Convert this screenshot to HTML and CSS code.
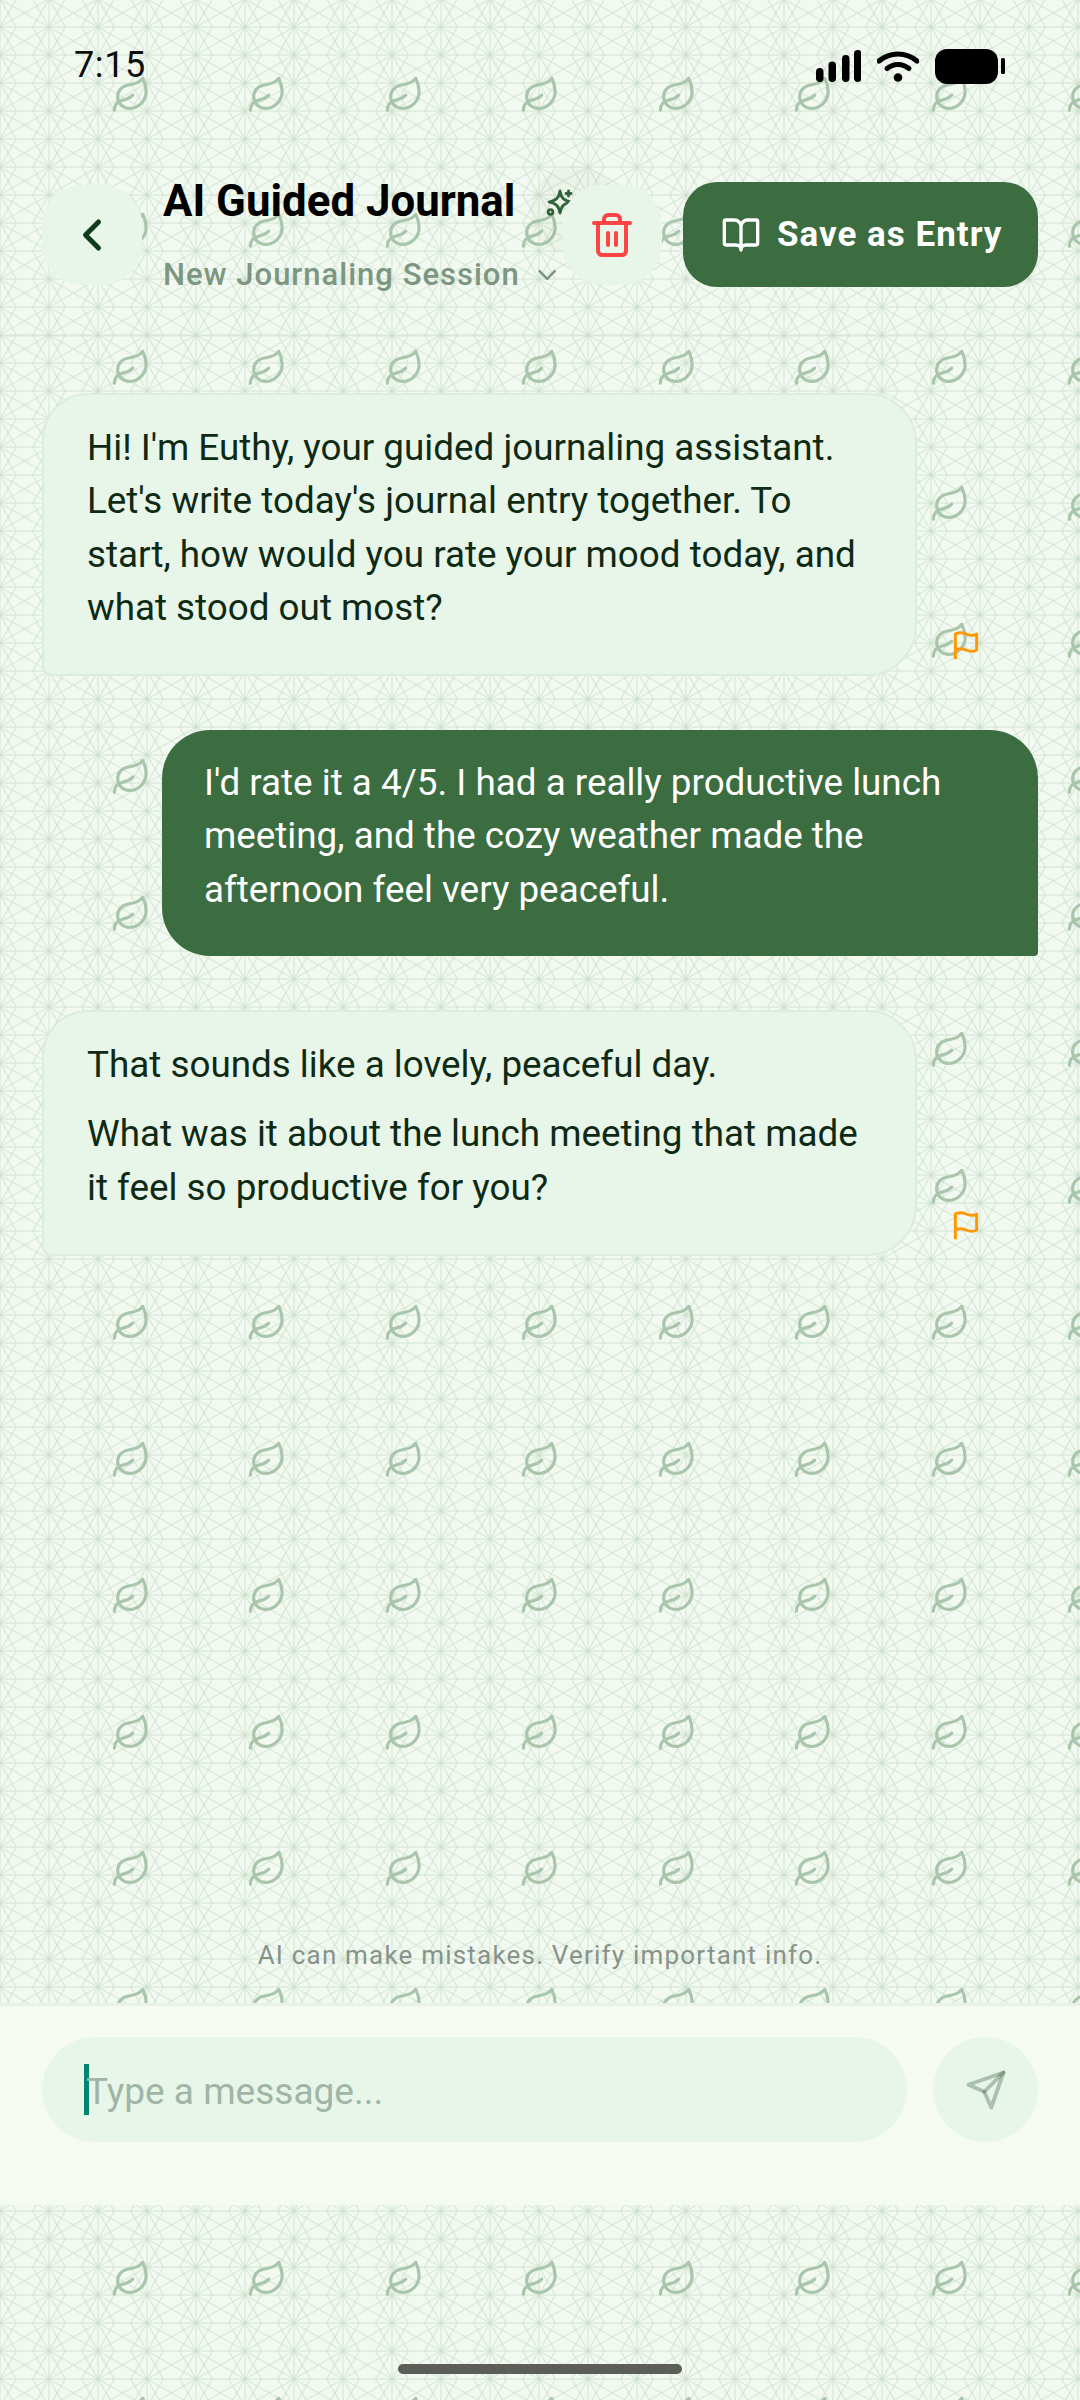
FILE: index.html
```html
<!DOCTYPE html>
<html lang="en">
<head>
<meta charset="utf-8">
<title>AI Guided Journal</title>
<link rel="stylesheet" href="styles.css">
</head>
<body>
<div class="app">
  <div class="status">
    <span class="time">7:15</span>
    <div class="status-icons">
      <svg class="sig" viewBox="0 0 45 32"><rect x="0" y="18" width="7.5" height="14" rx="3.7"/><rect x="12.5" y="11.5" width="7.5" height="20.5" rx="3.7"/><rect x="26" y="5" width="7.5" height="27" rx="3.7"/><rect x="38" y="0" width="7.5" height="32" rx="3.7"/></svg>
      <svg class="wifi" viewBox="0 0 42 32"><path class="wifi-arc" d="M2 11C13 1.500 29 1.500 40 11"/><path class="wifi-arc" d="M10 18.500C16.500 13 25.500 13 32 18.500"/><circle cx="21" cy="27.500" r="4.300"/></svg>
      <svg class="batt" viewBox="0 0 70 35"><rect x="0" y="0" width="63" height="35" rx="12"/><rect x="66" y="9" width="4" height="16" rx="1.500"/></svg>
    </div>
  </div>

  <header class="header">
    <button class="icon-btn back"><svg class="chev" viewBox="0 0 24 24"><path d="m15 18-6-6 6-6"/></svg></button>
    <div class="titles">
      <div class="title-row">
        <span class="title">AI Guided Journal</span>
        <svg class="spark" viewBox="0 0 28 28"><path d="M14 2C15.200 9 17.500 11.500 25 13 17.500 14.500 15.200 17 14 24 12.800 17 10.500 14.500 3 13 10.500 11.500 12.800 9 14 2Z"/><path d="M22.500 2v5M20 4.500h5"/><circle cx="4.500" cy="23" r="2.400"/></svg>
      </div>
      <div class="sub-row">
        <span class="subtitle">New Journaling Session</span>
        <svg class="sub-chev" viewBox="0 0 24 24"><path d="m6 9 6 6 6-6"/></svg>
      </div>
    </div>
    <button class="icon-btn trash-btn"><svg class="trash" viewBox="0 0 24 24"><path d="M3 6h18M19 6v14c0 1-1 2-2 2H7c-1 0-2-1-2-2V6M8 6V4c0-1 1-2 2-2h4c1 0 2 1 2 2v2M10 11v6M14 11v6"/></svg></button>
    <button class="save"><svg class="book" viewBox="0 0 24 24"><path d="M12 7v14M3 18a1 1 0 0 1-1-1V4a1 1 0 0 1 1-1h5a4 4 0 0 1 4 4 4 4 0 0 1 4-4h5a1 1 0 0 1 1 1v13a1 1 0 0 1-1 1h-6a3 3 0 0 0-3 3 3 3 0 0 0-3-3z"/></svg><span>Save as Entry</span></button>
  </header>

  <main class="messages">
    <div class="row">
      <div class="bubble ai"><p>Hi! I'm Euthy, your guided journaling assistant. Let's write today's journal entry together. To start, how would you rate your mood today, and what stood out most?</p></div>
      <svg class="flag" viewBox="0 0 24 24"><path d="M4 15s1-1 4-1 5 2 8 2 4-1 4-1V3s-1 1-4 1-5-2-8-2-4 1-4 1zM4 22v-7"/></svg>
    </div>
    <div class="row user-row">
      <div class="bubble user"><p>I'd rate it a 4/5. I had a really productive lunch meeting, and the cozy weather made the afternoon feel very peaceful.</p></div>
    </div>
    <div class="row">
      <div class="bubble ai"><p>That sounds like a lovely, peaceful day.</p><p>What was it about the lunch meeting that made it feel so productive for you?</p></div>
      <svg class="flag" viewBox="0 0 24 24"><path d="M4 15s1-1 4-1 5 2 8 2 4-1 4-1V3s-1 1-4 1-5-2-8-2-4 1-4 1zM4 22v-7"/></svg>
    </div>
  </main>

  <div class="note">AI can make mistakes. Verify important info.</div>

  <div class="composer">
    <div class="input"><span class="caret"></span><span class="placeholder">Type a message...</span></div>
    <button class="send"><svg class="send-icon" viewBox="0 0 24 24"><path d="M22 2 11 13"/><path d="M22 2l-7 20-4-9-9-4Z"/></svg></button>
  </div>

  <div class="home-wrap"><div class="home"></div></div>
</div>
</body>
</html>
```
FILE: styles.css
```css
* { box-sizing: border-box; }
html, body { margin: 0; padding: 0; }
body { width: 1080px; height: 2400px; overflow: hidden; font-family: Roboto, "Noto Sans", sans-serif; }
button { border: 0; padding: 0; font: inherit; }
p { margin: 0; }
svg { display: block; fill: none; stroke-linecap: round; stroke-linejoin: round; }

.app {
  position: relative;
  width: 1080px; height: 2400px; display: flex; flex-direction: column;
  background-color: #f2f9f0;
  background-image:
    url("data:image/svg+xml,%3Csvg xmlns='http://www.w3.org/2000/svg' width='49' height='28' viewBox='0 0 49 28'%3E%3Cg fill='none' stroke='%23c3d9c6' stroke-opacity='.46' stroke-width='1.500'%3E%3Cpath d='M0 0H49M0 28H49'/%3E%3Cpath d='M0 0V28M49 0V28'/%3E%3Cpath d='M0 0L49 28'/%3E%3Cpath d='M49 0L0 28'/%3E%3Cpath d='M0 0L16.300 28'/%3E%3Cpath d='M49 0L32.700 28'/%3E%3Cpath d='M0 28L16.300 0'/%3E%3Cpath d='M49 28L32.700 0'/%3E%3C/g%3E%3C/svg%3E");
  background-position: -0.500px -1px;
  background-size: 49px 28px;
}
/* decorative leaf layer behind the whole screen, first column starts at 111px */
.app::before {
  content: "";
  position: absolute;
  left: 111px; top: 0; right: 0; bottom: 0;
  background-image: url("data:image/svg+xml,%3Csvg xmlns='http://www.w3.org/2000/svg' width='136.5' height='136.5' viewBox='0 0 136.5 136.5'%3E%3Cg transform='scale(1.667)' fill='none' stroke='%23a9c6ad' stroke-width='1.9' stroke-linecap='round' stroke-linejoin='round'%3E%3Cpath d='M11 20A7 7 0 0 1 9.800 6.100C15.500 5 17 4.480 19 2c1 2 2 4.180 2 8 0 5.500-4.780 10-10 10Z'/%3E%3Cpath d='M2 21c0-3 1.850-5.360 5.080-6C9.500 14.520 12 13 13 12'/%3E%3C/g%3E%3C/svg%3E");
  background-position: 0 75px;
  background-size: 136.500px 136.500px;
}
.app > * { position: relative; }

/* status bar */
.status { height: 100px; flex: none; padding: 45px 75px 0 74px; display: flex; justify-content: space-between; align-items: flex-start; }
.time { font-size: 36px; line-height: 40px; color: #0d0d0d; letter-spacing: .6px; }
.status-icons { display: flex; align-items: flex-start; gap: 16px; margin-top: 4px; }
.status-icons svg { fill: #000; stroke: none; }
.sig { width: 45px; height: 32px; margin-top: 1px; }
.wifi { width: 42px; height: 32px; margin-top: 1px; }
.wifi-arc { fill: none; stroke: #000; stroke-width: 5; }
.batt { width: 70px; height: 35px; }

/* header */
.header { flex: none; height: 237px; padding: 82px 42px 0; display: flex; align-items: flex-start; border-bottom: 2px solid rgba(200, 215, 200, .25); }
.icon-btn { position: relative; width: 100px; height: 100px; border-radius: 40px; background: #e8f5e9; display: flex; align-items: center; justify-content: center; flex: none; margin-top: 3px; }
.chev { width: 52px; height: 52px; stroke: #0f3d1a; stroke-width: 2.300; }
.titles { flex: 1; min-width: 0; margin-left: 21px; margin-top: -6px; }
.title-row { position: relative; display: flex; align-items: center; gap: 31px; height: 50px; }
.title-row::after { content: ""; position: absolute; left: 367px; top: -10px; width: 90px; height: 90px; border-radius: 50%; background: rgba(90, 90, 70, .035); }
.title { font-size: 43.800px; line-height: 50px; font-weight: 700; color: #000; white-space: nowrap; }
.spark { width: 28px; height: 28px; flex: none; margin-top: 3px; stroke: #2e6438; stroke-width: 2.800; }
.sub-row { display: flex; align-items: center; gap: 12px; margin-top: 31px; }
.subtitle { font-size: 31px; line-height: 36px; font-weight: 500; color: #7d9681; letter-spacing: 1px; white-space: nowrap; }
.sub-chev { width: 32px; height: 32px; stroke: #7d9681; stroke-width: 2; }
.trash { width: 48px; height: 48px; stroke: #ff4444; stroke-width: 2; }
.save { flex: none; margin-left: 21px; width: 355px; height: 105px; border-radius: 34px; background: #3b6d40; color: #fff; display: flex; align-items: center; gap: 16px; padding-left: 38px; font-size: 35px; font-weight: 700; letter-spacing: 1px; }
.book { width: 40px; height: 40px; stroke: #fff; stroke-width: 2; flex: none; }

/* messages */
.messages { flex: 1; min-height: 0; padding: 56px 42px 0; display: flex; flex-direction: column; gap: 54px; }
.row { display: flex; align-items: flex-end; gap: 33px; }
.user-row { justify-content: flex-end; }
.bubble { font-size: 36.800px; line-height: 53.300px; padding: 26px 42px 40px 43px; }
.bubble p + p { margin-top: 16px; }
.ai { width: 875px; background: #e8f5e9; color: #0e2a14; border: 2px solid #dcecdd; border-radius: 46px 50px 50px 10px; }
.user { width: 876px; background: #3b6d40; color: #fff; border-radius: 48px 48px 4px 48px; padding-left: 42px; padding-right: 40px; }
.flag { width: 32px; height: 32px; flex: none; margin-bottom: 14px; stroke: #ff9800; stroke-width: 2.200; stroke-linecap: butt; }

.note { flex: none; height: 65px; text-align: center; font-size: 26px; line-height: 34px; letter-spacing: 1.200px; color: #87938a; }

/* composer */
.composer { flex: none; height: 202px; background: #f5fbf0; border-top: 3px solid #e8f3e8; padding: 31px 42px 0; display: flex; align-items: flex-start; gap: 26px; }
.input { flex: 1; height: 105px; border-radius: 53px; background: #e8f5e9; display: flex; align-items: center; padding-left: 42px; }
.caret { width: 5px; height: 51px; background: #008573; flex: none; }
.placeholder { font-size: 37px; color: #a0b5a5; margin-left: -3px; padding-top: 3px; }
.send { width: 105px; height: 105px; border-radius: 50%; background: #e8f5e9; flex: none; display: flex; align-items: center; justify-content: center; }
.send-icon { width: 42px; height: 42px; stroke: #1e4628; stroke-opacity: .3; stroke-width: 2.200; }

/* home */
.home-wrap { flex: none; height: 195px; display: flex; align-items: flex-end; justify-content: center; padding-bottom: 26px; }
.home { width: 284px; height: 10px; border-radius: 5px; background: #5c5f59; }
```
